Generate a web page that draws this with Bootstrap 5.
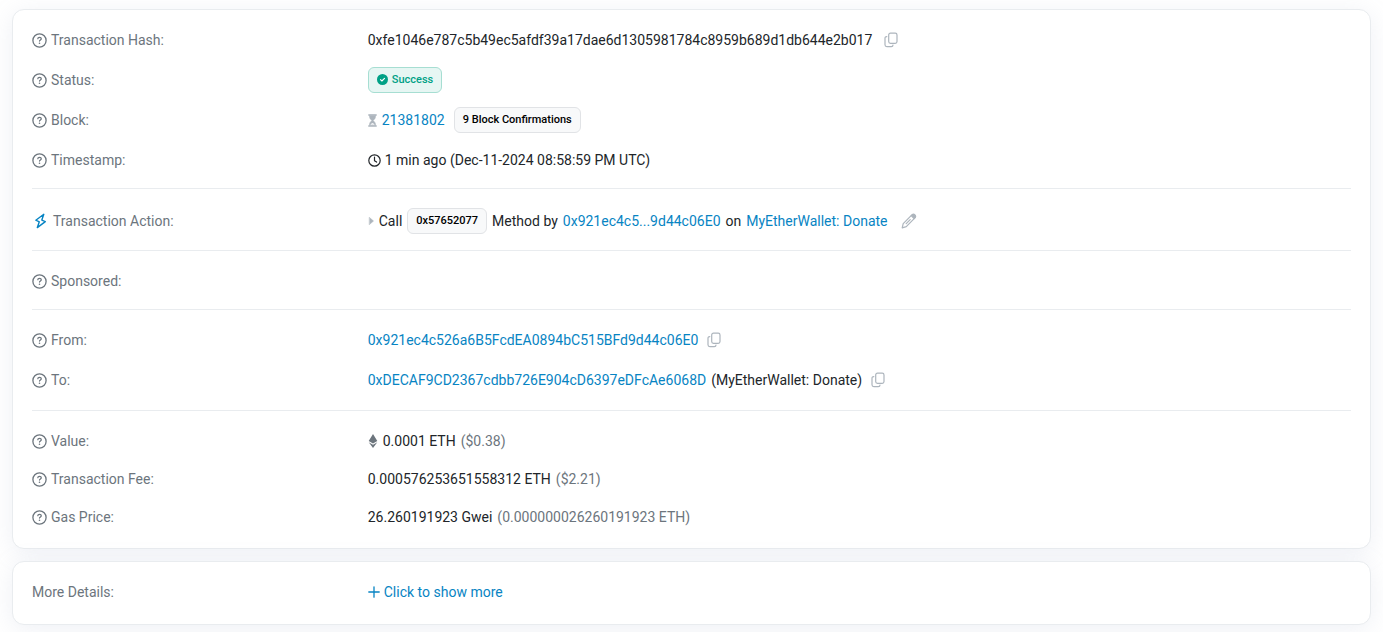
<!DOCTYPE html>
<html lang="en">
<head>
<meta charset="utf-8">
<meta name="viewport" content="width=device-width, initial-scale=1">
<title>Transaction Details</title>
<link href="https://cdn.jsdelivr.net/npm/bootstrap@5.3.0/dist/css/bootstrap.min.css" rel="stylesheet">
<style>
  body { font-family: Roboto, "Liberation Sans", sans-serif; font-size: 14px; line-height: 20px; color: #212529; background: #fff; }
  a, .plain.btn-more { color: #0784c3; text-decoration: none; }
  .page { padding: 9px 12px 7px; }
  .tx-card { border: 1px solid #e9ecef; border-radius: 12px; padding: 0 19px; box-shadow: 0 4px 24px rgba(140, 152, 190, .15); }
  .tx-card + .tx-card { margin-top: 12px; }
  .tx-group { border-bottom: 1px solid #e9ecef; padding: 10px 0; }
  .tx-group:last-child { border-bottom: 0; padding-bottom: 12px; }
  .tx-group.first { padding-bottom: 8px; }
  .tx-group.action { padding: 12px 0 9px; }
  .tx-row { min-height: 40px; align-items: center; margin-bottom: 0; }
  .compact .tx-row { min-height: 38px; }
  .tx-group.compact { padding-top: 11px; }
  .tx-row dt { font-weight: 400; color: #6c757d; }
  .tx-row dd { margin: 0; }
  .tx-row dt, .tx-row dd { display: flex; align-items: center; gap: 4px; }
  .tx-row dd.wide { gap: 5px; }
  svg { flex: none; fill: none; stroke: currentColor; stroke-linecap: round; stroke-linejoin: round; }
  .bolt { color: #0784c3; }
  .plain { border: 0; padding: 0; background: none; display: inline-flex; align-items: center; gap: 4px; color: #adb5bd; }
  .tag { font-size: 11px; line-height: 15px; font-weight: 500; padding: 4px 8px 5px; border: 1px solid #e1e3e6; border-radius: 6px; background: #f8f9fa; color: #000; display: inline-flex; align-items: center; gap: 4px; }
  .tag-ok { background: #e6f6f3; border-color: #a6ded2; color: #00a186; }
  .muted { color: #6c757d; }
  .soft { color: #adb5bd; }
</style>
</head>
<body>
<svg width="0" height="0" class="position-absolute" aria-hidden="true">
  <symbol id="help" viewBox="0 0 15 15"><circle cx="7.5" cy="7.5" r="6.600" stroke-width="1.300"/><path d="M5.800 5.700c0-.9.700-1.400 1.700-1.400s1.800.5 1.800 1.400c0 1.200-1.800 1.200-1.800 2.400" stroke-width="1.200"/><circle cx="7.500" cy="10.200" r=".8" fill="currentColor" stroke="none"/></symbol>
  <symbol id="copy" viewBox="0 0 14 16"><rect x="4.700" y="1.200" width="8.300" height="10.200" rx="1.800" stroke-width="1.200"/><path d="M2.800 4.600C1.600 4.600 1 5.200 1 6.200v6.600C1 14 1.600 14.600 2.800 14.600h4.500c1.100 0 1.700-.6 1.700-1.600" stroke-width="1.200"/></symbol>
</svg>
<main class="container-fluid page">
  <section class="card tx-card">
    <div class="tx-group first">
      <dl class="row tx-row">
        <dt class="col-3"><svg width="15" height="15"><use href="#help"/></svg>Transaction Hash:</dt>
        <dd class="col-9">0xfe1046e787c5b49ec5afdf39a17dae6d1305981784c8959b689d1db644e2b017<button class="plain ms-2" aria-label="Copy hash"><svg width="14" height="16"><use href="#copy"/></svg></button></dd>
      </dl>
      <dl class="row tx-row">
        <dt class="col-3"><svg width="15" height="15"><use href="#help"/></svg>Status:</dt>
        <dd class="col-9"><span class="tag tag-ok"><svg width="11" height="11" viewBox="0 0 11 11"><circle cx="5.500" cy="5.500" r="5.500" fill="currentColor" stroke="none"/><path d="M3.500 5.600l1.400 1.400 2.600-2.600" stroke="#fff" stroke-width="1.100"/></svg>Success</span></dd>
      </dl>
      <dl class="row tx-row">
        <dt class="col-3"><svg width="15" height="15"><use href="#help"/></svg>Block:</dt>
        <dd class="col-9 wide"><svg class="soft" width="9" height="13" viewBox="0 0 9 13"><path d="M.8 1h7.400M.8 12h7.400" stroke-width="1.500"/><path d="M1.500 1.500v1.500q0 1.500 2.300 3.500-2.300 2-2.300 3.500v1.500h6v-1.500q0-1.500-2.300-3.500 2.300-2 2.300-3.500v-1.500z" fill="currentColor" stroke-width=".5"/><path d="M2.800 10.400Q4.500 8.200 6.200 10.400z" fill="#fff" stroke="#fff" stroke-width=".4"/></svg><a href="#">21381802</a><span class="tag ms-1">9 Block Confirmations</span></dd>
      </dl>
      <dl class="row tx-row">
        <dt class="col-3"><svg width="15" height="15"><use href="#help"/></svg>Timestamp:</dt>
        <dd class="col-9"><svg width="13" height="13" viewBox="0 0 13 13" stroke-width="1.200"><circle cx="6.500" cy="6.500" r="5.700"/><path d="M6.500 3.200v3.500l2.100 1.400"/></svg>1 min ago (Dec-11-2024 08:58:59 PM UTC)</dd>
      </dl>
    </div>
    <div class="tx-group action">
      <dl class="row tx-row">
        <dt class="col-3"><svg class="bolt" width="17" height="16" viewBox="0 0 17 16" stroke-width="1.400"><path d="M11.800 1.300L3.800 7.200l3.500 1.600-2 5.800 8-6-3.500-1.500z"/></svg>Transaction Action:</dt>
        <dd class="col-9 wide"><svg class="soft" width="6" height="8" viewBox="0 0 6 8"><path d="M1.500.5L5.500 4l-4 3.500z" fill="currentColor" stroke-width=".5"/></svg>Call <span class="tag">0x57652077</span> Method by <a href="#">0x921ec4c5...9d44c06E0</a> on <a href="#">MyEtherWallet: Donate</a><button class="plain ms-2" aria-label="Edit note"><svg width="16" height="16" viewBox="0 0 16 16" stroke-width="1.200"><path d="M1.200 14.800l1-4.200 8.700-8.700q1.600-1.400 3 0t0 3L5.300 13.600zM5.200 10.700l4-4"/><path d="M10.200 2.700l2.900 2.900 1.100-1.200q.8-1-.2-2t-2.200-.8z" fill="currentColor"/></svg></button></dd>
      </dl>
    </div>
    <div class="tx-group first">
      <dl class="row tx-row">
        <dt class="col-3"><svg width="15" height="15"><use href="#help"/></svg>Sponsored:</dt>
        <dd class="col-9"></dd>
      </dl>
    </div>
    <div class="tx-group">
      <dl class="row tx-row">
        <dt class="col-3"><svg width="15" height="15"><use href="#help"/></svg>From:</dt>
        <dd class="col-9 wide"><a href="#">0x921ec4c526a6B5FcdEA0894bC515BFd9d44c06E0</a><button class="plain ms-1" aria-label="Copy sender"><svg width="14" height="16"><use href="#copy"/></svg></button></dd>
      </dl>
      <dl class="row tx-row">
        <dt class="col-3"><svg width="15" height="15"><use href="#help"/></svg>To:</dt>
        <dd class="col-9 wide"><a href="#">0xDECAF9CD2367cdbb726E904cD6397eDFcAe6068D</a> (MyEtherWallet: Donate)<button class="plain ms-1" aria-label="Copy recipient"><svg width="14" height="16"><use href="#copy"/></svg></button></dd>
      </dl>
    </div>
    <div class="tx-group compact">
      <dl class="row tx-row">
        <dt class="col-3"><svg width="15" height="15"><use href="#help"/></svg>Value:</dt>
        <dd class="col-9 wide"><svg class="muted" width="10" height="14" viewBox="0 0 10 14"><path d="M5 0l4.300 7L5 9.500.7 7zM.7 8.200L5 10.700l4.300-2.500L5 14z" fill="currentColor" stroke="none"/></svg>0.0001 ETH <span class="muted">($0.38)</span></dd>
      </dl>
      <dl class="row tx-row">
        <dt class="col-3"><svg width="15" height="15"><use href="#help"/></svg>Transaction Fee:</dt>
        <dd class="col-9 wide">0.000576253651558312 ETH <span class="muted">($2.21)</span></dd>
      </dl>
      <dl class="row tx-row">
        <dt class="col-3"><svg width="15" height="15"><use href="#help"/></svg>Gas Price:</dt>
        <dd class="col-9 wide">26.260191923 Gwei <span class="muted">(0.000000026260191923 ETH)</span></dd>
      </dl>
    </div>
  </section>
  <section class="card tx-card">
    <div class="tx-group">
      <dl class="row tx-row">
        <dt class="col-3">More Details:</dt>
        <dd class="col-9"><button class="plain btn-more"><svg width="12" height="12" viewBox="0 0 12 12" stroke-width="1.300"><path d="M6 .8v10.400M.8 6h10.400"/></svg>Click to show more</button></dd>
      </dl>
    </div>
  </section>
</main>
<script src="https://cdn.jsdelivr.net/npm/bootstrap@5.3.0/dist/js/bootstrap.bundle.min.js"></script>
</body>
</html>
